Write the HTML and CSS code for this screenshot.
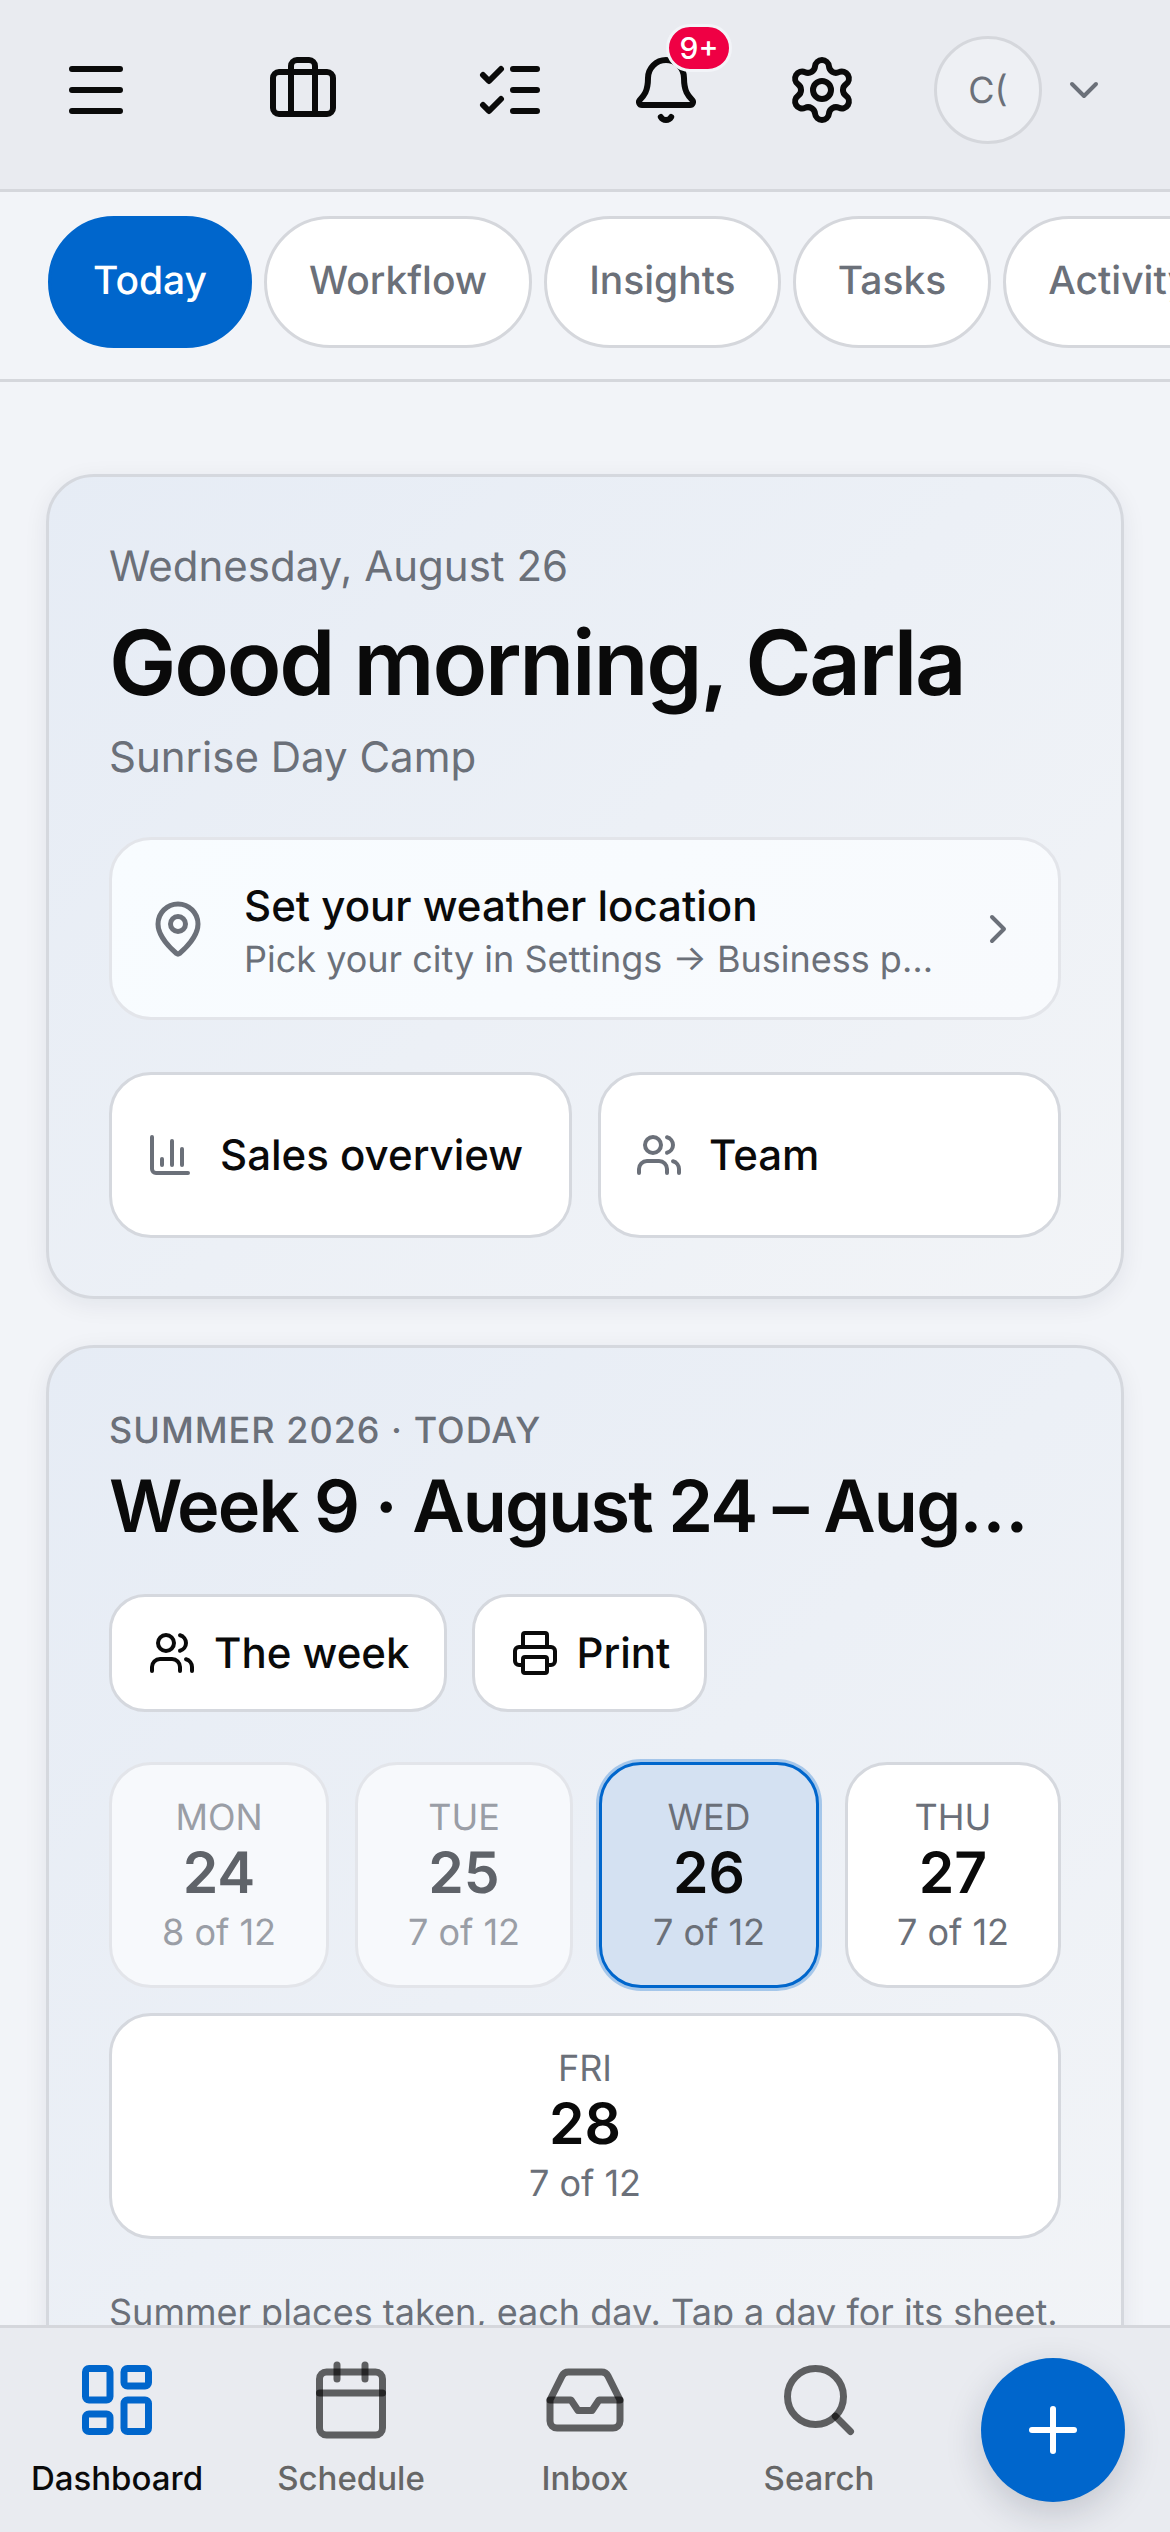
FILE: index.html
```html
<!DOCTYPE html>
<html lang="en">
<head>
<meta charset="utf-8">
<title>Dashboard</title>
<link rel="stylesheet" href="styles.css">
</head>
<body>
<div class="app">
  <header class="topbar">
    <button class="tb-icon"><svg class="ic72" viewBox="0 0 24 24"><path d="M4 5h16M4 12h16M4 19h16"/></svg></button>
    <button class="tb-icon gap-wide"><svg class="ic72" viewBox="0 0 24 24"><path d="M16 20V4a2 2 0 0 0-2-2h-4a2 2 0 0 0-2 2v16"/><rect width="20" height="14" x="2" y="6" rx="2"/></svg></button>
    <button class="tb-icon gap-wide"><svg class="ic72" viewBox="0 0 24 24"><path d="M13 5h8M13 12h8M13 19h8M3 17l2 2 4-4M3 7l2 2 4-4"/></svg></button>
    <button class="tb-icon gap-mid bell"><svg class="ic72" viewBox="0 0 24 24"><path d="M10.268 21a2 2 0 0 0 3.464 0"/><path d="M3.262 15.326A1 1 0 0 0 4 17h16a1 1 0 0 0 .74-1.673C19.41 13.956 18 12.499 18 8A6 6 0 0 0 6 8c0 4.499-1.411 5.956-2.738 7.326"/></svg><span class="badge">9+</span></button>
    <button class="tb-icon gap-mid"><svg class="ic72" viewBox="0 0 24 24"><path d="M9.671 4.136a2.34 2.34 0 0 1 4.659 0 2.34 2.34 0 0 0 3.319 1.915 2.34 2.34 0 0 1 2.33 4.033 2.34 2.34 0 0 0 0 3.831 2.34 2.34 0 0 1-2.33 4.033 2.34 2.34 0 0 0-3.319 1.915 2.34 2.34 0 0 1-4.659 0 2.34 2.34 0 0 0-3.32-1.915 2.34 2.34 0 0 1-2.33-4.033 2.34 2.34 0 0 0 0-3.831A2.34 2.34 0 0 1 6.35 6.051a2.34 2.34 0 0 0 3.319-1.915"/><circle cx="12" cy="12" r="3"/></svg></button>
    <div class="avatar"><span>C(</span></div>
    <svg class="chev-down" viewBox="0 0 24 24"><path d="m6 9 6 6 6-6"/></svg>
  </header>

  <nav class="tabs">
    <a class="tab active">Today</a>
    <a class="tab">Workflow</a>
    <a class="tab">Insights</a>
    <a class="tab">Tasks</a>
    <a class="tab">Activity</a>
  </nav>

  <main class="content">
    <section class="card">
      <p class="date">Wednesday, August 26</p>
      <h1 class="greet">Good morning, Carla</h1>
      <p class="camp">Sunrise Day Camp</p>

      <a class="weather">
        <svg class="ic60 muted" viewBox="0 0 24 24"><path d="M20 10c0 4.993-5.539 10.193-7.399 11.799a1 1 0 0 1-1.202 0C9.539 20.193 4 14.993 4 10a8 8 0 0 1 16 0"/><circle cx="12" cy="10" r="3"/></svg>
        <div class="weather-text">
          <div class="weather-title">Set your weather location</div>
          <div class="weather-sub">Pick your city in Settings → Business profile</div>
        </div>
        <svg class="ic48 muted chev-right" viewBox="0 0 24 24"><path d="m9 18 6-6-6-6"/></svg>
      </a>

      <div class="quick">
        <a class="quick-btn">
          <svg class="ic48 muted" viewBox="0 0 24 24"><path d="M3 3v16a2 2 0 0 0 2 2h16"/><path d="M18 17V9"/><path d="M13 17V5"/><path d="M8 17v-3"/></svg>
          <span>Sales overview</span>
        </a>
        <a class="quick-btn">
          <svg class="ic48 muted" viewBox="0 0 24 24"><path d="M16 21v-2a4 4 0 0 0-4-4H6a4 4 0 0 0-4 4v2"/><path d="M16 3.128a4 4 0 0 1 0 7.744"/><path d="M22 21v-2a4 4 0 0 0-3-3.87"/><circle cx="9" cy="7" r="4"/></svg>
          <span>Team</span>
        </a>
      </div>
    </section>

    <section class="card">
      <p class="eyebrow">SUMMER 2026 · TODAY</p>
      <h2 class="week">Week 9 · August 24 – August 28</h2>
      <div class="actions">
        <a class="action">
          <svg class="ic48" viewBox="0 0 24 24"><path d="M16 21v-2a4 4 0 0 0-4-4H6a4 4 0 0 0-4 4v2"/><path d="M16 3.128a4 4 0 0 1 0 7.744"/><path d="M22 21v-2a4 4 0 0 0-3-3.87"/><circle cx="9" cy="7" r="4"/></svg>
          <span>The week</span>
        </a>
        <a class="action">
          <svg class="ic48" viewBox="0 0 24 24"><path d="M6 18H4a2 2 0 0 1-2-2v-5a2 2 0 0 1 2-2h16a2 2 0 0 1 2 2v5a2 2 0 0 1-2 2h-2"/><path d="M6 9V3a1 1 0 0 1 1-1h10a1 1 0 0 1 1 1v6"/><rect x="6" y="14" width="12" height="8" rx="1"/></svg>
          <span>Print</span>
        </a>
      </div>
      <div class="days">
        <a class="day past"><span class="dow">MON</span><span class="num">24</span><span class="cnt">8 of 12</span></a>
        <a class="day past"><span class="dow">TUE</span><span class="num">25</span><span class="cnt">7 of 12</span></a>
        <a class="day today"><span class="dow">WED</span><span class="num">26</span><span class="cnt">7 of 12</span></a>
        <a class="day"><span class="dow">THU</span><span class="num">27</span><span class="cnt">7 of 12</span></a>
        <a class="day wide"><span class="dow">FRI</span><span class="num">28</span><span class="cnt">7 of 12</span></a>
      </div>
      <p class="note">Summer places taken, each day. Tap a day for its sheet.</p>
    </section>
  </main>

  <nav class="bottom">
    <a class="nav-item current">
      <svg class="ic84" viewBox="0 0 24 24"><rect width="7" height="9" x="3" y="3" rx="1"/><rect width="7" height="5" x="14" y="3" rx="1"/><rect width="7" height="9" x="14" y="12" rx="1"/><rect width="7" height="5" x="3" y="16" rx="1"/></svg>
      <span>Dashboard</span>
    </a>
    <a class="nav-item">
      <svg class="ic84" viewBox="0 0 24 24"><path d="M8 2v4"/><path d="M16 2v4"/><rect width="18" height="18" x="3" y="4" rx="2"/><path d="M3 10h18"/></svg>
      <span>Schedule</span>
    </a>
    <a class="nav-item">
      <svg class="ic84" viewBox="0 0 24 24"><polyline points="22 12 16 12 14 15 10 15 8 12 2 12"/><path d="M5.45 5.11 2 12v6a2 2 0 0 0 2 2h16a2 2 0 0 0 2-2v-6l-3.45-6.89A2 2 0 0 0 16.76 4H7.24a2 2 0 0 0-1.79 1.11z"/></svg>
      <span>Inbox</span>
    </a>
    <a class="nav-item">
      <svg class="ic84" viewBox="0 0 24 24"><path d="m21 21-4.34-4.34"/><circle cx="11" cy="11" r="8"/></svg>
      <span>Search</span>
    </a>
    <div class="fab-cell">
      <button class="fab"><svg class="ic72" viewBox="0 0 24 24"><path d="M5 12h14"/><path d="M12 5v14"/></svg></button>
    </div>
  </nav>
</div>
</body>
</html>
```

FILE: styles.css
```css
* { box-sizing: border-box; }
html, body { margin: 0; padding: 0; }
body {
  font-family: Inter, "Noto Sans", sans-serif;
  background: #f2f4f8;
  color: #0a0a0a;
  text-rendering: geometricPrecision;
  -webkit-font-smoothing: antialiased;
}
p, h1, h2 { margin: 0; }
button { border: 0; padding: 0; background: none; font: inherit; color: inherit; }
svg {
  display: block;
  flex: none;
  fill: none;
  stroke: currentColor;
  stroke-width: 2;
  stroke-linecap: round;
  stroke-linejoin: round;
}
.ic84 { width: 84px; height: 84px; }
.ic72 { width: 72px; height: 72px; }
.ic60 { width: 60px; height: 60px; }
.ic48 { width: 48px; height: 48px; }
.muted { color: #6b7079; }

.app { width: 1170px; height: 2532px; overflow: hidden; position: relative; }

/* top bar */
.topbar {
  height: 192px;
  display: flex;
  align-items: center;
  padding: 0 0 9px 60px;
  background: #e9ebf0;
  border-bottom: 3px solid #d5d7dc;
}
.tb-icon { position: relative; display: block; }
.gap-wide { margin-left: 135px; }
.gap-mid { margin-left: 84px; }
.badge {
  position: absolute;
  left: 36px;
  top: -30px;
  height: 48px;
  min-width: 66px;
  padding: 0 9px;
  border: 3px solid #f2f4f8;
  border-radius: 24px;
  background: #ef0044;
  color: #fff;
  font-size: 30px;
  font-weight: 500;
  line-height: 42px;
  text-align: center;
}
.avatar {
  width: 108px;
  height: 108px;
  margin-left: 76px;
  display: flex;
  align-items: center;
  justify-content: center;
  border: 3px solid #d5d7dc;
  border-radius: 50%;
  background: #eef0f4;
  color: #6b7079;
  font-size: 36px;
  font-weight: 400;
}
.chev-down { width: 48px; height: 48px; margin-left: 18px; color: #6b7079; }

/* tabs */
.tabs {
  height: 190px;
  display: flex;
  gap: 12px;
  padding: 24px 0 0 48px;
  overflow: hidden;
  border-bottom: 3px solid #d5d7dc;
  background: #f2f4f8;
}
.tab {
  flex: none;
  height: 132px;
  display: flex;
  align-items: center;
  padding: 0 42px 4px;
  border: 3px solid #d5d7dc;
  border-radius: 66px;
  background: #fff;
  color: #6b7079;
  font-size: 39px;
  font-weight: 500;
}
.tab.active { background: #0066cc; border-color: #0066cc; color: #fff; }

/* cards */
.content { padding: 92px 46px 0; display: flex; flex-direction: column; gap: 46px; }
.card {
  padding: 60px 60px 58px;
  border: 3px solid #d5d8de;
  border-radius: 48px;
  background: linear-gradient(135deg, #e6ecf5 0%, #f2f4f7 100%);
  box-shadow: 0 6px 24px rgba(20, 30, 50, .07);
}
.date { font-size: 42px; line-height: 60px; color: #6b7079; }
.greet { margin-top: 12px; font-size: 90px; line-height: 108px; font-weight: 600; letter-spacing: -2.25px; }
.camp { margin-top: 11px; font-size: 42px; line-height: 60px; color: #6b7079; }

.weather {
  margin-top: 49px;
  height: 183px;
  display: flex;
  align-items: center;
  padding: 0 36px;
  border: 3px solid #e3e5ea;
  border-radius: 42px;
  background: linear-gradient(135deg, #f8fcff, #f8fafd);
}
.weather-text { flex: 1; min-width: 0; margin-left: 36px; padding-top: 5px; }
.weather-title { font-size: 42px; line-height: 54px; font-weight: 500; }
.weather-sub {
  margin-top: 1px;
  font-size: 36px;
  line-height: 48px;
  color: #6b7079;
  white-space: nowrap;
  overflow: hidden;
  text-overflow: ellipsis;
}
.chev-right { margin-left: 36px; }

.quick { margin-top: 52px; display: grid; grid-template-columns: 1fr 1fr; gap: 26px; }
.quick-btn {
  height: 166px;
  display: flex;
  align-items: center;
  gap: 26px;
  padding: 0 34px;
  border: 3px solid #d5d8de;
  border-radius: 42px;
  background: #fff;
  font-size: 42px;
  font-weight: 500;
}

.eyebrow { font-size: 36px; line-height: 44px; font-weight: 500; letter-spacing: 1px; color: #6b7079; }
.week {
  margin-top: 10px;
  font-size: 72px;
  line-height: 90px;
  font-weight: 600;
  letter-spacing: -1.8px;
  white-space: nowrap;
  overflow: hidden;
  text-overflow: ellipsis;
}
.actions { margin-top: 42px; display: flex; gap: 25px; }
.action {
  height: 118px;
  display: flex;
  align-items: center;
  gap: 18px;
  padding: 0 34px 0 36px;
  border: 3px solid #d5d8de;
  border-radius: 36px;
  background: #fff;
  font-size: 42px;
  font-weight: 500;
}

.days { margin-top: 50px; display: grid; grid-template-columns: 220fr 218fr 220fr 216fr; gap: 25px 26px; }
.day {
  height: 226px;
  display: flex;
  flex-direction: column;
  align-items: center;
  justify-content: center;
  border: 3px solid #d5d8de;
  border-radius: 42px;
  background: #fff;
}
.wide { grid-column: 1 / -1; }
.dow { font-size: 36px; line-height: 45px; color: #6b7079; }
.num { font-size: 57px; line-height: 66px; font-weight: 600; }
.cnt { margin-top: 4px; font-size: 36px; line-height: 45px; color: #6b7079; }
.past { background: #f7f9fc; border-color: #e3e5ea; }
.past .dow, .past .cnt { color: #9a9ea6; }
.past .num { color: #5f6369; }
.today { background: #d4e1f2; border-color: #0066cc; box-shadow: 0 0 0 3px rgba(0, 102, 204, .3); }
.note { margin-top: 46px; font-size: 36px; line-height: 54px; color: #6b7079; }

/* bottom nav */
.bottom {
  position: absolute;
  left: 0;
  right: 0;
  bottom: 0;
  height: 207px;
  display: grid;
  grid-template-columns: repeat(5, 234px);
  border-top: 3px solid #d5d7dc;
  background: #e9ebf0;
}
.nav-item {
  display: flex;
  flex-direction: column;
  align-items: center;
  padding-top: 30px;
  font-size: 33px;
  font-weight: 500;
  line-height: 48px;
  color: #666;
}
.nav-item svg { color: rgba(0, 0, 0, .6); }
.nav-item span { margin-top: 12px; }
.nav-item.current { color: #0a0a0a; }
.nav-item.current svg { color: #0066cc; }
.fab-cell { display: flex; justify-content: center; padding-top: 30px; }
.fab {
  width: 144px;
  height: 144px;
  display: flex;
  align-items: center;
  justify-content: center;
  border-radius: 50%;
  background: #0066cc;
  color: #fff;
  box-shadow: 0 12px 36px rgba(20, 30, 50, .18);
}
```
